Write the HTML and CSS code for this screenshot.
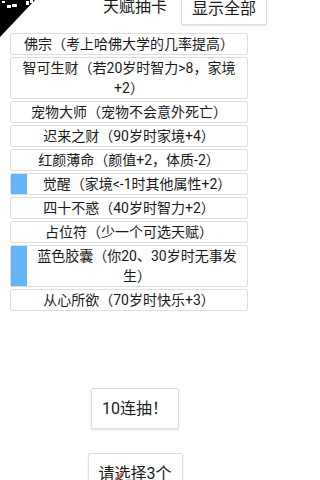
FILE: index.html
```html
<!DOCTYPE html>
<html lang="zh-CN">
<head>
<meta charset="utf-8">
<title>天赋抽卡</title>
<link rel="stylesheet" href="styles.css">
</head>
<body>
<svg class="corner" width="40" height="40" viewBox="0 0 40 40" aria-hidden="true">
  <polygon points="0,0 35,0 0,37" fill="#000"/>
  <rect x="7" y="5" width="4" height="3" fill="#fff"/>
  <rect x="12" y="4" width="5" height="3" fill="#fff"/>
  <rect x="2" y="1" width="3" height="2" fill="#fff"/>
  <rect x="26" y="1" width="3" height="4" fill="#fff"/>
  <rect x="30" y="0" width="3" height="3" fill="#fff"/>
</svg>
<div class="page">
  <header class="top">
    <span class="spacer"></span>
    <h1 class="title">天赋抽卡</h1>
    <button class="btn btn-show">显示全部</button>
  </header>
  <ul class="talents">
    <li class="talent"><span class="name">佛宗（考上哈佛大学的几率提高）</span></li>
    <li class="talent"><span class="name">智可生财（若20岁时智力&gt;8，家境+2）</span></li>
    <li class="talent"><span class="name">宠物大师（宠物不会意外死亡）</span></li>
    <li class="talent"><span class="name">迟来之财（90岁时家境+4）</span></li>
    <li class="talent"><span class="name">红颜薄命（颜值+2，体质-2）</span></li>
    <li class="talent selected"><span class="bar"></span><span class="name">觉醒（家境&lt;-1时其他属性+2）</span></li>
    <li class="talent"><span class="name">四十不惑（40岁时智力+2）</span></li>
    <li class="talent"><span class="name">占位符（少一个可选天赋）</span></li>
    <li class="talent selected"><span class="bar"></span><span class="name">蓝色胶囊（你20、30岁时无事发生）</span></li>
    <li class="talent"><span class="name">从心所欲（70岁时快乐+3）</span></li>
  </ul>
  <div class="actions">
    <button class="btn btn-big">10连抽！</button>
    <button class="btn btn-big">请选择3个</button>
  </div>
</div>
<svg class="touch" width="12" height="12" viewBox="0 0 12 12" aria-hidden="true">
  <path d="M2 10 L9 3" stroke="#d9534f" stroke-width="2.2" stroke-linecap="round" opacity="0.8"/>
</svg>
</body>
</html>
```
FILE: styles.css
```css
html, body {
  margin: 0;
  padding: 0;
  background: #fff;
}

body {
  position: relative;
  width: 270px;
  height: 480px;
  overflow: hidden;
  font-family: Roboto, "Noto Sans CJK SC", sans-serif;
  color: #1a1a1a;
}

.corner {
  position: absolute;
  left: 0;
  top: 0;
}

.touch {
  position: absolute;
  left: 114px;
  top: 469px;
}

.page {
  display: flex;
  flex-direction: column;
}

.top {
  display: grid;
  grid-template-columns: 1fr auto 1fr;
  align-items: start;
  margin-top: -7px;
}

.title {
  margin: 0;
  padding-top: 4px;
  font-size: 16px;
  font-weight: normal;
  line-height: 20px;
}

.btn {
  font-family: inherit;
  color: #1a1a1a;
  background: #fff;
  border: 1px solid #dcdcdc;
  border-radius: 2px;
  box-shadow: 0 1px 2px rgba(0, 0, 0, 0.12);
  font-size: 16px;
  line-height: 19px;
  padding: 10px 10px;
  margin: 0;
}

.btn-show {
  justify-self: end;
  margin-right: 3px;
  line-height: 20px;
  padding: 5px 10px;
}

.talents {
  list-style: none;
  margin: 8px 0 0 10px;
  padding: 0;
  width: 238px;
  display: flex;
  flex-direction: column;
  gap: 2px;
}

.talent {
  display: flex;
  border: 1px solid #dedede;
  border-radius: 2px;
  font-size: 14px;
  line-height: 20px;
  text-align: center;
}

.bar {
  flex: none;
  width: 16px;
  background: #64b5f6;
}

.name {
  flex: 1;
  padding: 0 4px;
}

.actions {
  display: flex;
  flex-direction: column;
  align-items: center;
  gap: 24px;
  margin-top: 77px;
}
```
